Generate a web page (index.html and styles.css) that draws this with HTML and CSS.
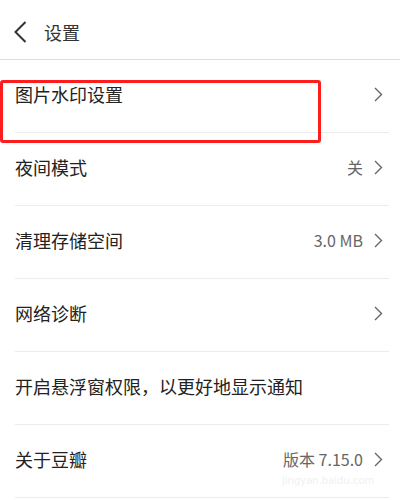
FILE: index.html
```html
<!DOCTYPE html>
<html lang="zh-CN">
<head>
<meta charset="utf-8">
<link rel="stylesheet" href="styles.css">
</head>
<body>
<div class="page">
  <header class="topbar">
    <svg class="back" width="14" height="22" viewBox="0 0 14 22"><path d="M12.5 1 L2.5 11 L12.5 21" fill="none" stroke="#333" stroke-width="2"/></svg>
    <span class="title">设置</span>
  </header>
  <ul class="list">
    <li class="row"><span class="label">图片水印设置</span><span class="right"><svg class="chev" width="9" height="15" viewBox="0 0 9 15"><path d="M1 1 L7.5 7.5 L1 14" fill="none" stroke="#666" stroke-width="1.4"/></svg></span></li>
    <li class="row"><span class="label">夜间模式</span><span class="right"><span class="value">关</span><svg class="chev" width="9" height="15" viewBox="0 0 9 15"><path d="M1 1 L7.5 7.5 L1 14" fill="none" stroke="#666" stroke-width="1.4"/></svg></span></li>
    <li class="row"><span class="label">清理存储空间</span><span class="right"><span class="value">3.0 MB</span><svg class="chev" width="9" height="15" viewBox="0 0 9 15"><path d="M1 1 L7.5 7.5 L1 14" fill="none" stroke="#666" stroke-width="1.4"/></svg></span></li>
    <li class="row"><span class="label">网络诊断</span><span class="right"><svg class="chev" width="9" height="15" viewBox="0 0 9 15"><path d="M1 1 L7.5 7.5 L1 14" fill="none" stroke="#666" stroke-width="1.4"/></svg></span></li>
    <li class="row"><span class="label">开启悬浮窗权限，以更好地显示通知</span></li>
    <li class="row"><span class="label">关于豆瓣</span><span class="right"><span class="value">版本 7.15.0</span><svg class="chev" width="9" height="15" viewBox="0 0 9 15"><path d="M1 1 L7.5 7.5 L1 14" fill="none" stroke="#666" stroke-width="1.4"/></svg></span></li>
  </ul>
  <div class="highlight"></div>
  <div class="watermark">jingyan.baidu.com</div>
</div>
</body>
</html>
```
FILE: styles.css
```css
html, body {
  margin: 0;
  padding: 0;
  background: #fff;
}
.page {
  position: relative;
  width: 400px;
  height: 500px;
  overflow: hidden;
  font-family: "Noto Sans CJK SC", "Noto Sans", sans-serif;
  color: #222;
}
.topbar {
  height: 60px;
  border-bottom: 1px solid #dedede;
  display: flex;
  align-items: center;
  padding-left: 13px;
  box-sizing: border-box;
}
.back {
  display: block;
  margin-top: 4px;
}
.title {
  margin-left: 17px;
  font-size: 18px;
  color: #333;
  margin-top: 4px;
}
.list {
  list-style: none;
  margin: 0 11px 0 15px;
  padding: 0;
}
.row {
  height: 73px;
  border-bottom: 1px solid #ececec;
  display: flex;
  align-items: center;
  justify-content: space-between;
  padding-right: 6px;
  box-sizing: border-box;
  padding-bottom: 4px;
}
.label {
  font-size: 18px;
  color: #222;
}
.right {
  display: flex;
  align-items: center;
}
.value {
  font-size: 16px;
  color: #666;
  margin-right: 11px;
}
.chev {
  display: block;
}
.highlight {
  position: absolute;
  left: 0;
  top: 80px;
  width: 321px;
  height: 63px;
  border: 3px solid #ff1c1c;
  border-radius: 3px;
  box-sizing: border-box;
}
.watermark {
  position: absolute;
  left: 282px;
  top: 475px;
  font-family: "DejaVu Sans", sans-serif;
  font-size: 10px;
  color: #f0f0f0;
}
```
